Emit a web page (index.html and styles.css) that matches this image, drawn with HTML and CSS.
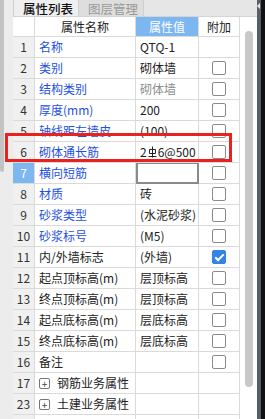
FILE: index.html
```html
<!DOCTYPE html>
<html lang="zh-CN">
  <head>
    <meta charset="UTF-8" />
    <title>属性列表</title>
    <link rel="stylesheet" href="styles.css">
  </head>
  <body>
    <div class="side-left"><div class="splitter"></div></div>

    <div class="panel">
      <div class="tabs">
        <div class="tab active">属性列表</div>
        <div class="tab">图层管理</div>
      </div>

      <div class="body">
        <div class="grid">
          <div class="cell num head"></div>
          <div class="cell head">属性名称</div>
          <div class="cell head value-head">属性值</div>
          <div class="cell head">附加</div>

          <div class="cell num">1</div>
          <div class="cell name blue">名称</div>
          <div class="cell val">QTQ-1</div>
          <div class="cell box"></div>

          <div class="cell num">2</div>
          <div class="cell name blue">类别</div>
          <div class="cell val">砌体墙</div>
          <div class="cell box"><span class="check"></span></div>

          <div class="cell num">3</div>
          <div class="cell name blue">结构类别</div>
          <div class="cell val muted">砌体墙</div>
          <div class="cell box"><span class="check"></span></div>

          <div class="cell num">4</div>
          <div class="cell name blue">厚度(mm)</div>
          <div class="cell val">200</div>
          <div class="cell box"><span class="check"></span></div>

          <div class="cell num">5</div>
          <div class="cell name blue">轴线距左墙皮...</div>
          <div class="cell val">(100)</div>
          <div class="cell box"><span class="check"></span></div>

          <div class="cell num">6</div>
          <div class="cell name blue">砌体通长筋</div>
          <div class="cell val">2<svg class="rebar" width="9" height="12" viewBox="0 0 9 12"><path d="M4.5 0.5V11.5M1.5 3.5H7.5V7.5H1.5ZM0.5 10.5H8.5" fill="none" stroke="#222" stroke-width="1"/></svg>6@500</div>
          <div class="cell box"><span class="check"></span></div>

          <div class="cell num selected">7</div>
          <div class="cell name blue">横向短筋</div>
          <div class="cell val editing"></div>
          <div class="cell box"><span class="check"></span></div>

          <div class="cell num">8</div>
          <div class="cell name blue">材质</div>
          <div class="cell val">砖</div>
          <div class="cell box"><span class="check"></span></div>

          <div class="cell num">9</div>
          <div class="cell name blue">砂浆类型</div>
          <div class="cell val">(水泥砂浆)</div>
          <div class="cell box"><span class="check"></span></div>

          <div class="cell num">10</div>
          <div class="cell name blue">砂浆标号</div>
          <div class="cell val">(M5)</div>
          <div class="cell box"><span class="check"></span></div>

          <div class="cell num">11</div>
          <div class="cell name">内/外墙标志</div>
          <div class="cell val">(外墙)</div>
          <div class="cell box"><span class="check on"></span></div>

          <div class="cell num">12</div>
          <div class="cell name">起点顶标高(m)</div>
          <div class="cell val">层顶标高</div>
          <div class="cell box"><span class="check"></span></div>

          <div class="cell num">13</div>
          <div class="cell name">终点顶标高(m)</div>
          <div class="cell val">层顶标高</div>
          <div class="cell box"><span class="check"></span></div>

          <div class="cell num">14</div>
          <div class="cell name">起点底标高(m)</div>
          <div class="cell val">层底标高</div>
          <div class="cell box"><span class="check"></span></div>

          <div class="cell num">15</div>
          <div class="cell name">终点底标高(m)</div>
          <div class="cell val">层底标高</div>
          <div class="cell box"><span class="check"></span></div>

          <div class="cell num">16</div>
          <div class="cell name">备注</div>
          <div class="cell val"></div>
          <div class="cell box"><span class="check"></span></div>

          <div class="cell num">17</div>
          <div class="cell name"><span class="plus">+</span>钢筋业务属性</div>
          <div class="cell val"></div>
          <div class="cell box"></div>

          <div class="cell num">23</div>
          <div class="cell name"><span class="plus">+</span>土建业务属性</div>
          <div class="cell val"></div>
          <div class="cell box"></div>

          <div class="cell num"></div>
          <div class="cell name"></div>
          <div class="cell val"></div>
          <div class="cell box"></div>
        </div>

        <div class="scrollbar"><div class="thumb"></div></div>
      </div>
    </div>

    <div class="edge"><span class="arrow"></span></div>
    <div class="black"></div>

    <!-- highlight drawn over rows 5/6 -->
    <div class="mark"></div>
  </body>
</html>
```

FILE: styles.css
```css
html,
body {
  margin: 0;
  height: 419px;
  overflow: hidden;
}

body {
  display: flex;
  position: relative;
  font-family: "Noto Sans CJK SC", "Liberation Sans", sans-serif;
  font-size: 12px;
  color: #222;
  background: #fff;
}

.side-left {
  width: 13px;
  flex: none;
  background: #ececec;
}

.splitter {
  width: 4px;
  height: 172px;
  background: #c3c3c3;
  border-radius: 0 0 2px 2px;
}

.panel {
  width: 244px;
  flex: none;
  display: flex;
  flex-direction: column;
}

.tabs {
  height: 16px;
  flex: none;
  display: flex;
  align-items: flex-start;
  background: #e6e6e6;
}

.tab {
  height: 16px;
  padding: 0 5px 0 9px;
  font-size: 12.5px;
  line-height: 17px;
  color: #999;
  background: #dedede;
  border-right: 1px solid #cfcfcf;
  box-sizing: border-box;
}

.tab.active {
  color: #111;
  font-weight: 500;
  background: #efefef;
  border-left: 1px solid #cfcfcf;
}

.body {
  flex: 1;
  display: flex;
  min-height: 0;
  border-top: 1px solid #d4d4d4;
}

.grid {
  width: 227px;
  flex: none;
  display: grid;
  grid-template-columns: 22px 101px 63px 41px;
  grid-template-rows: 20px;
  grid-auto-rows: 21px;
  align-content: start;
}

.cell {
  box-sizing: border-box;
  border-right: 1px solid #dadada;
  border-bottom: 1px solid #dadada;
  display: flex;
  align-items: center;
  white-space: nowrap;
  overflow: hidden;
  line-height: 20px;
}

.head {
  justify-content: center;
  color: #222;
}

.value-head {
  background: #7db7ef;
  color: #fff;
}

.num {
  justify-content: center;
  background: #f0f0f0;
  color: #333;
}

.num.head {
  background: #fff;
}

.num.selected {
  background: #7db7ef;
  color: #fff;
}

.name {
  padding-left: 4px;
}

.blue {
  color: #1d4fe3;
}

.val {
  padding-left: 4px;
}

.muted {
  color: #8c8c8c;
}

.editing {
  border: 2px solid #8a8a8a;
  border-top-width: 1px;
}

.rebar {
  margin: 0 1px;
}

.box {
  justify-content: center;
}

.check {
  width: 12px;
  height: 12px;
  border: 1px solid #8a8a8a;
  border-radius: 2px;
  background: #fff;
  position: relative;
}

.check.on {
  background: #3584e4;
  border-color: #3584e4;
}

.check.on::after {
  content: "";
  position: absolute;
  left: 4px;
  top: 1px;
  width: 3px;
  height: 7px;
  border: solid #fff;
  border-width: 0 2px 2px 0;
  transform: rotate(45deg);
}

.plus {
  width: 9px;
  height: 9px;
  border: 1px solid #777;
  border-radius: 2px;
  font-size: 10px;
  line-height: 9px;
  text-align: center;
  color: #444;
  margin-right: 7px;
}

.scrollbar {
  width: 17px;
  flex: none;
  background: #fff;
  padding: 14px 4px 0 5px;
  box-sizing: border-box;
}

.thumb {
  width: 8px;
  height: 356px;
  background: #c8c8c8;
  border-radius: 4px;
}

.edge {
  width: 4px;
  flex: none;
  background: #55606b;
  position: relative;
}

.arrow {
  position: absolute;
  left: 0;
  top: 3px;
  border: 3px solid transparent;
  border-right-color: #e8e8e8;
  border-left-width: 0;
}

.black {
  flex: 1;
  background: #111;
}

.mark {
  position: absolute;
  left: 5px;
  top: 133px;
  width: 227px;
  height: 29px;
  border: 3px solid #e8231f;
  box-sizing: border-box;
}
```
